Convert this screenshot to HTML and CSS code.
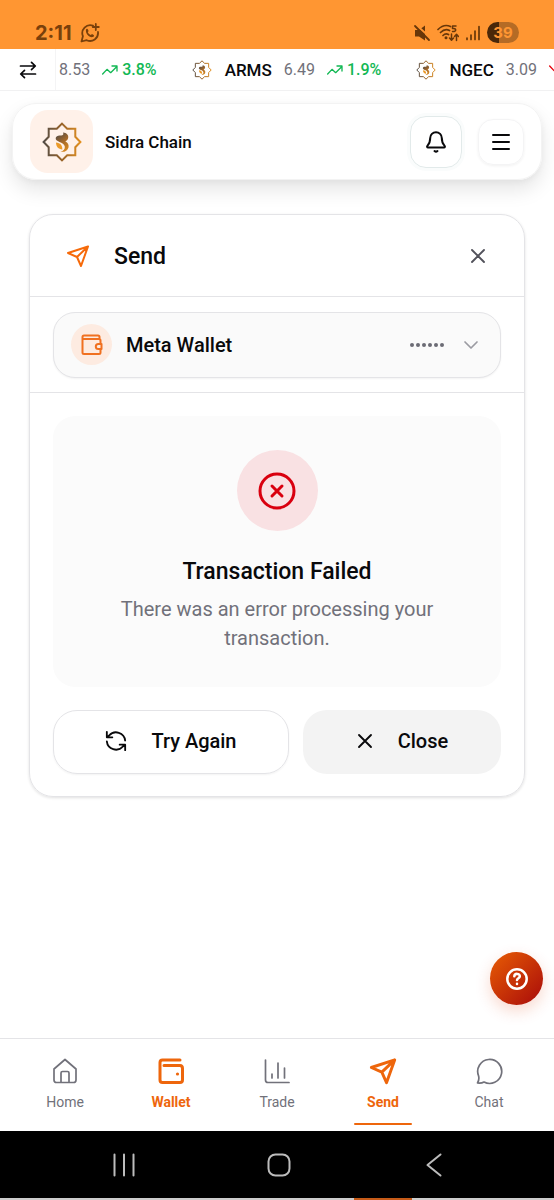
FILE: index.html
```html
<!DOCTYPE html>
<html lang="en">
<head>
<meta charset="utf-8">
<meta name="viewport" content="width=device-width, initial-scale=1">
<title>Sidra Chain - Send</title>
<link rel="stylesheet" href="styles.css">
</head>
<body>
<svg class="defs" aria-hidden="true">
  <defs>
    <linearGradient id="gold" x1="0" y1="0" x2="40" y2="0" gradientUnits="userSpaceOnUse">
      <stop offset="0" stop-color="#4d4a48"/>
      <stop offset=".5" stop-color="#99642a"/>
      <stop offset="1" stop-color="#e89420"/>
    </linearGradient>
    <linearGradient id="curl" x1="14" y1="12" x2="26" y2="28" gradientUnits="userSpaceOnUse">
      <stop offset="0" stop-color="#4d4a48"/>
      <stop offset=".5" stop-color="#a4682a"/>
      <stop offset="1" stop-color="#d98a20"/>
    </linearGradient>
    <symbol id="logo" viewBox="0 0 40 40">
      <path fill="none" stroke="url(#gold)" stroke-width="2" d="M20 1.6 25.2 6.7H33.3V14.8L38.4 20 33.3 25.2V33.3H25.2L20 38.4 14.8 33.3H6.7V25.2L1.600 20 6.7 14.8V6.7H14.8Z"/>
      <path fill="url(#curl)" d="M21 10.500c3.500.3 5.800 2.500 5.200 5.200-.3 1.700-1.300 2.900-2.900 3.700 2.700 1 3.800 3.500 3.200 6-.8 3.200-4 5-8 4.300 3.100-.8 4.700-2.700 4.300-5.200-.4-2.600-2.800-3.700-5.300-4.600-2.700-1-4-2.300-3.800-3.900.3-2.200 2.800-2.900 5-2.500 1.900.3 3.400-1 2.300-3Z"/>
      <path fill="#eb9a28" d="M14 20.500c4.200.6 6.500 2.700 6.300 7-4-.3-6.300-2.800-6.300-7Z"/>
    </symbol>
    <symbol id="trend" viewBox="0 0 24 24">
      <path d="M1 18l6.500-7 5.500 5L22 7M15 6h7.500v7.500"/>
    </symbol>
    <symbol id="plane" viewBox="0 0 24 24">
      <path d="M22 2.500 2 9 11 13 15 22ZM22 2.500 11 13"/>
    </symbol>
    <symbol id="cross" viewBox="0 0 24 24"><path d="M4 4l16 16M20 4 4 20"/></symbol>
  </defs>
</svg>

<div class="app">
  <div class="status">
    <div class="status-group">
      <span class="clock">2:11</span>
      <svg class="icon i20" viewBox="0 0 20 20"><path stroke-width="1.800" d="M13 2.700A8 8 0 0 0 2.900 13.200L1.500 18.500 6.700 17.200A8 8 0 0 0 18 9M15.800 1v6M12.800 4h6"/><path fill="currentColor" stroke="none" d="M6 6.500c.6-1 1.500-1 1.900-.1l.7 1.600-.8 1.200c.7 1.400 1.700 2.200 3 2.800l1.200-1 1.700.9c.7.5.2 1.700-.8 2.100C9.500 15 5 10.500 6 6.500Z"/></svg>
    </div>
    <div class="status-group right">
      <svg class="icon i18" viewBox="0 0 18 18"><path fill="currentColor" stroke="none" d="M2 6h4l6-4.500v15L6 12.500H2Z"/><path class="slash" d="M2 0l16 14"/><path stroke-width="1.800" d="M2 2l14 14"/></svg>
      <svg class="icon wifi" viewBox="0 0 22 18"><path stroke-width="1.700" d="M1 5.500Q7-.5 13.500 2.500M3.500 8.500Q8 4 12.500 6.500M6 11.500Q8.500 9 11.500 10.500"/><circle cx="9" cy="13.800" r="1.500" fill="currentColor" stroke="none"/><path stroke-width="1.500" d="M19 2h-3.500v2.500c4-.7 4.500 3.500 0 3M14.500 10v6M12.500 14l2 2.300 2-2.300M19.500 16.500v-6M17.500 12.500l2-2.300 2 2.300"/></svg>
      <svg class="icon signal" viewBox="0 0 16 16"><path stroke-width="1.700" d="M2 13v1.500M6 10v4.500M10 6v8.500M14 1.500v13"/></svg>
      <span class="battery">39</span>
    </div>
  </div>

  <div class="ticker">
    <button class="swap" aria-label="Switch market"><svg class="icon i18" viewBox="0 0 18 18"><path stroke-width="1.700" d="M1.500 5H16M12.500 1.300 16.300 5l-3.800 3.700M16.500 13H2M5.500 9.300 1.700 13l3.800 3.700"/></svg></button>
    <div class="ticker-list">
      <div class="quote"><span class="price">8.53</span><svg class="icon i16 up"><use href="#trend"/></svg><span class="pct">3.8%</span></div>
      <div class="quote"><svg class="i20 coin"><use href="#logo"/></svg><b>ARMS</b><span class="price">6.49</span><svg class="icon i16 up"><use href="#trend"/></svg><span class="pct">1.9%</span></div>
      <div class="quote"><svg class="i20 coin"><use href="#logo"/></svg><b>NGEC</b><span class="price">3.09</span><svg class="icon i16 down" viewBox="0 0 24 24"><path d="M1 6l6.500 7 5.500-5L22 17M15 18h7.500v-7.500"/></svg></div>
    </div>
  </div>

  <header class="topbar">
    <span class="brand-mark"><svg><use href="#logo"/></svg></span>
    <span class="brand">Sidra Chain</span>
    <button class="bell" aria-label="Notifications"><svg class="icon i24" viewBox="0 0 24 24"><path stroke-width="2" d="M6.200 8a5.800 5.800 0 0 1 11.600 0c0 5 1.600 6.500 2.800 7.800.7.800.3 1.700-.6 1.700H4c-.9 0-1.300-.9-.6-1.700C4.600 14.500 6.200 13 6.200 8ZM10.500 21q1.500 1.200 3 0"/></svg></button>
    <button class="menu" aria-label="Menu"><svg class="icon i24" viewBox="0 0 24 24"><path stroke-width="2" d="M4 5h16M4 12h16M4 19h16"/></svg></button>
  </header>

  <main>
    <section class="card">
      <div class="card-head">
        <svg class="icon i24 accent"><use href="#plane"/></svg>
        <h1>Send</h1>
        <button class="dismiss" aria-label="Close panel"><svg class="icon i18"><use href="#cross"/></svg></button>
      </div>
      <div class="wallet-row">
        <button class="wallet">
          <span class="wallet-mark"><svg class="icon i24" viewBox="0 0 24 24"><path d="M20.500 10V7.500q0-1.500-1.500-1.500H2.500M19.500 6V4q0-1.500-1.500-1.500H4Q2.500 2.500 2.500 4v15.500q0 1.500 1.500 1.500h15q1.500 0 1.500-1.500V16M21.500 11h-3.200a2.500 2.500 0 0 0 0 5h3.200Z"/></svg></span>
          <span class="wallet-name">Meta Wallet</span>
          <svg class="mask" viewBox="0 0 36 6" role="img" aria-label="Balance hidden"><circle cx="3" cy="3" r="2"/><circle cx="9" cy="3" r="2"/><circle cx="15" cy="3" r="2"/><circle cx="21" cy="3" r="2"/><circle cx="27" cy="3" r="2"/><circle cx="33" cy="3" r="2"/></svg>
          <svg class="icon i16 chevron" viewBox="0 0 16 16"><path stroke-width="1.700" d="M2 5l6 6 6-6"/></svg>
        </button>
      </div>
      <div class="card-body">
        <div class="result">
          <span class="result-mark"><svg class="icon" viewBox="0 0 40 40"><circle cx="20" cy="20" r="17"/><path d="M15 15l10 10M25 15 15 25"/></svg></span>
          <h2>Transaction Failed</h2>
          <p>There was an error processing your transaction.</p>
        </div>
        <div class="actions">
          <button class="retry"><svg class="icon retry-icon" viewBox="0 0 24 24"><path d="M22 11.500A10 10 0 0 0 4.500 6L2.500 7.500M2 2v6h6M2 12.500A10 10 0 0 0 19.500 18l2-1.500M22 22v-6h-6"/></svg>Try Again</button>
          <button class="close"><svg class="icon i18"><use href="#cross"/></svg>Close</button>
        </div>
      </div>
    </section>
    <button class="help" aria-label="Help"><svg class="icon i24" viewBox="0 0 24 24"><circle cx="12" cy="12" r="9.700"/><path d="M9.300 9.300c.3-3.500 5.900-3 5.500.2-.2 1.700-2.600 1.800-2.800 3.600M12 16.800v.1"/></svg></button>
  </main>

  <nav class="tabs">
    <a href="#home"><svg class="icon i28" viewBox="0 0 28 28"><path d="M3 12 14 2.500 25 12v11q0 2.500-2.500 2.500h-17Q3 25.500 3 23ZM10 25.500V16q0-1.500 1.500-1.500h5Q18 14.500 18 16v9.500"/></svg>Home</a>
    <a href="#wallet" class="on"><svg class="icon i28" viewBox="0 0 28 28"><path d="M23 3H5.500Q3 3 3 5.500v17.500q0 2.500 2.500 2.500h17.500q2.500 0 2.500-2.500V11.500q0-3-2.500-3H7"/><circle cx="20.500" cy="17" r="1.600" fill="currentColor" stroke="none"/></svg>Wallet</a>
    <a href="#trade"><svg class="icon i28" viewBox="0 0 28 28"><path d="M2.500 3v20q0 2.500 2.500 2.500h21M9 17v4M15 6v15M21.500 11v10"/></svg>Trade</a>
    <a href="#send" class="on current"><svg class="icon i28"><use href="#plane"/></svg>Send</a>
    <a href="#chat"><svg class="icon i28" viewBox="0 0 28 28"><path d="M3.600 19A12 12 0 1 1 9 25Q6.500 26.500 2.500 26 4.500 22.500 3.600 19Z"/></svg>Chat</a>
  </nav>

  <div class="system">
    <button aria-label="Recent apps"><svg class="icon i24" viewBox="0 0 24 24"><path d="M2.500 1.500v21M12 1.500v21M21.500 1.500v21"/></svg></button>
    <button aria-label="Home screen"><svg class="icon i24" viewBox="0 0 24 24"><rect x="1.500" y="1.500" width="21" height="21" rx="7"/></svg></button>
    <button aria-label="Back"><svg class="icon i24" viewBox="0 0 24 24"><path d="M18.500 1.500 5.500 12l13 10.500"/></svg></button>
  </div>
  <div class="edge"><span></span></div>
</div>
</body>
</html>
```
FILE: styles.css
```css
* { box-sizing: border-box; }
body { margin: 0; background: #fff; color: #09090b; font-family: Roboto, "Liberation Sans", sans-serif; font-size: 16px; }
button { font: inherit; color: inherit; background: none; border: 0; padding: 0; display: flex; align-items: center; justify-content: center; }
h1, h2, p { margin: 0; }
svg { display: block; flex: none; }
.defs { position: absolute; width: 0; height: 0; }
.icon { fill: none; stroke: currentColor; stroke-width: 2; stroke-linecap: round; stroke-linejoin: round; }
.i16 { width: 16px; height: 16px; }
.i18 { width: 18px; height: 18px; }
.i20 { width: 20px; height: 20px; }
.i24 { width: 24px; height: 24px; }
.i28 { width: 28px; height: 28px; }

.app { min-height: 100vh; display: flex; flex-direction: column; }

.status { height: 49px; padding: 16px 35px 0; background: #ff9632; color: #79400b; display: flex; align-items: center; justify-content: space-between; }
.status-group { display: flex; align-items: center; gap: 8px; }
.right { gap: 6px; color: #683709; }
.clock { font: 700 20px Inter, Roboto, sans-serif; }
.slash { stroke: #ff9632; }
.wifi { width: 22px; height: 18px; }
.signal { width: 16px; height: 16px; }
.battery { width: 32px; height: 21px; border-radius: 11px; background: linear-gradient(90deg, #4a2809 39%, #b56b25 39%); color: #ff9632; font: 700 15px/21px Inter, Roboto, sans-serif; text-align: center; }

.ticker { height: 42px; display: flex; align-items: center; border-bottom: 1px solid #f1f1f2; overflow: hidden; }
.swap { width: 56px; height: 100%; flex: none; border-right: 1px solid #f4f4f5; }
.ticker-list { display: flex; gap: 35px; padding-left: 3px; flex: 1; min-width: 0; overflow: hidden; }
.quote { display: flex; align-items: center; flex: none; }
.quote b { font-weight: 500; font-size: 17px; margin: 0 12px 0 13px; }
.price { color: #71717a; margin-right: 12px; }
.pct { font-weight: 500; color: #12b854; margin-left: 4px; }
.up { color: #12b854; }
.down { color: #e7000b; }

.topbar { margin: 12px 12px 0; height: 77px; padding: 0 17px; display: flex; align-items: center; border: 1px solid #f3f3f3; border-radius: 24px; box-shadow: 0 10px 20px rgba(0, 0, 0, .1), 0 2px 6px rgba(0, 0, 0, .04); }
.brand-mark { width: 63px; height: 63px; border-radius: 18px; background: #fff1e9; display: grid; place-items: center; }
.brand-mark svg { width: 40px; height: 40px; }
.brand { flex: 1; margin-left: 12px; font-size: 17px; font-weight: 500; }
.bell { width: 52px; height: 52px; border: 1px solid #e2eaea; border-radius: 16px; box-shadow: 0 0 0 3px #fafcfc; }
.menu { width: 46px; height: 46px; margin-left: 16px; border: 1px solid #f4f4f5; border-radius: 15px; box-shadow: 0 1px 3px rgba(0, 0, 0, .06); }

main { flex: 1; position: relative; padding: 34px 29px; }
.card { border: 1px solid #e4e4e7; border-radius: 24px; box-shadow: 0 1px 3px rgba(0, 0, 0, .12); }
.card-head { height: 82px; padding: 0 36px; display: flex; align-items: center; border-bottom: 1px solid #e4e4e7; }
.accent { color: #f66a0a; }
h1 { flex: 1; margin-left: 24px; font-size: 23px; line-height: 30px; padding-top: 2px; font-weight: 500; }
.dismiss { width: 20px; height: 40px; color: #52525b; }
.card #cross, .dismiss .icon, .close .icon { stroke-width: 2.5; }
.wallet-row { padding: 15px 23px 14px; border-bottom: 1px solid #e4e4e7; }
.wallet { width: 100%; height: 66px; padding: 0 21px 1px 17px; border: 1px solid #e4e4e7; border-radius: 22px; background: #fafafa; box-shadow: 0 1px 2px rgba(0, 0, 0, .05); }
.wallet-mark { width: 41px; height: 41px; border-radius: 50%; background: #fdebe1; color: #f07020; display: grid; place-items: center; }
.wallet-name { flex: 1; margin-left: 14px; text-align: left; font-size: 20px; font-weight: 500; }
.mask { width: 36px; height: 6px; fill: #6b6b74; }
.chevron { margin-left: 18px; color: #9b9ba2; }
.card-body { padding: 23px 23px 22px; }
.result { padding: 34px 40px 34px; border-radius: 22px; background: #fbfbfb; text-align: center; display: flex; flex-direction: column; align-items: center; }
.result-mark { width: 81px; height: 81px; border-radius: 50%; background: #f9e1e3; color: #d9000f; display: grid; place-items: center; }
.result-mark svg { width: 40px; height: 40px; stroke-width: 3; }
h2 { margin: 26px 0 8px; font-size: 23px; line-height: 30px; font-weight: 500; }
.result p { color: #71717a; font-size: 20px; line-height: 29px; }
.actions { margin-top: 23px; display: flex; gap: 14px; font-size: 20px; font-weight: 500; }
.actions button { height: 64px; border-radius: 24px; gap: 24px; padding-bottom: 2px; }
.retry { flex: 235; border: 1px solid #e4e4e7; box-shadow: 0 1px 2px rgba(0, 0, 0, .05); }
.retry-icon { width: 22px; height: 22px; }
.close { flex: 199; background: #f3f3f3; }
.help { position: absolute; right: 11px; bottom: 33px; width: 53px; height: 53px; border-radius: 50%; color: #fff; background: linear-gradient(135deg, #e85d04, #a80a0a); box-shadow: 0 6px 16px rgba(220, 60, 10, .2); }
.help .icon { stroke-width: 2.5; }

.tabs { height: 93px; padding: 0 12px; display: grid; grid-template-columns: repeat(5, 1fr); border-top: 1px solid #e4e4e7; }
.tabs a { position: relative; padding-top: 18px; display: flex; flex-direction: column; align-items: center; gap: 8px; color: #71717a; font-size: 14px; line-height: 18px; text-decoration: none; }
.tabs .icon { stroke-width: 1.7; }
.tabs .on { color: #ee660c; font-weight: 700; }
.tabs .on .icon { stroke-width: 3; }
.tabs .current .icon { stroke-width: 2.5; }
.current::after { content: ""; position: absolute; bottom: 6px; width: 58px; height: 2px; border-radius: 1px; background: #ee660c; }
.system { height: 67px; padding: 0 43px 0 46px; display: grid; grid-template-columns: repeat(3, 1fr); background: #000; color: #bcbcbc; }
.edge { height: 2px; padding: 0 12px; display: grid; grid-template-columns: repeat(5, 1fr); background: #ccc; }
.edge span { grid-column: 4; justify-self: center; width: 58px; background: #c65b18; }
```
